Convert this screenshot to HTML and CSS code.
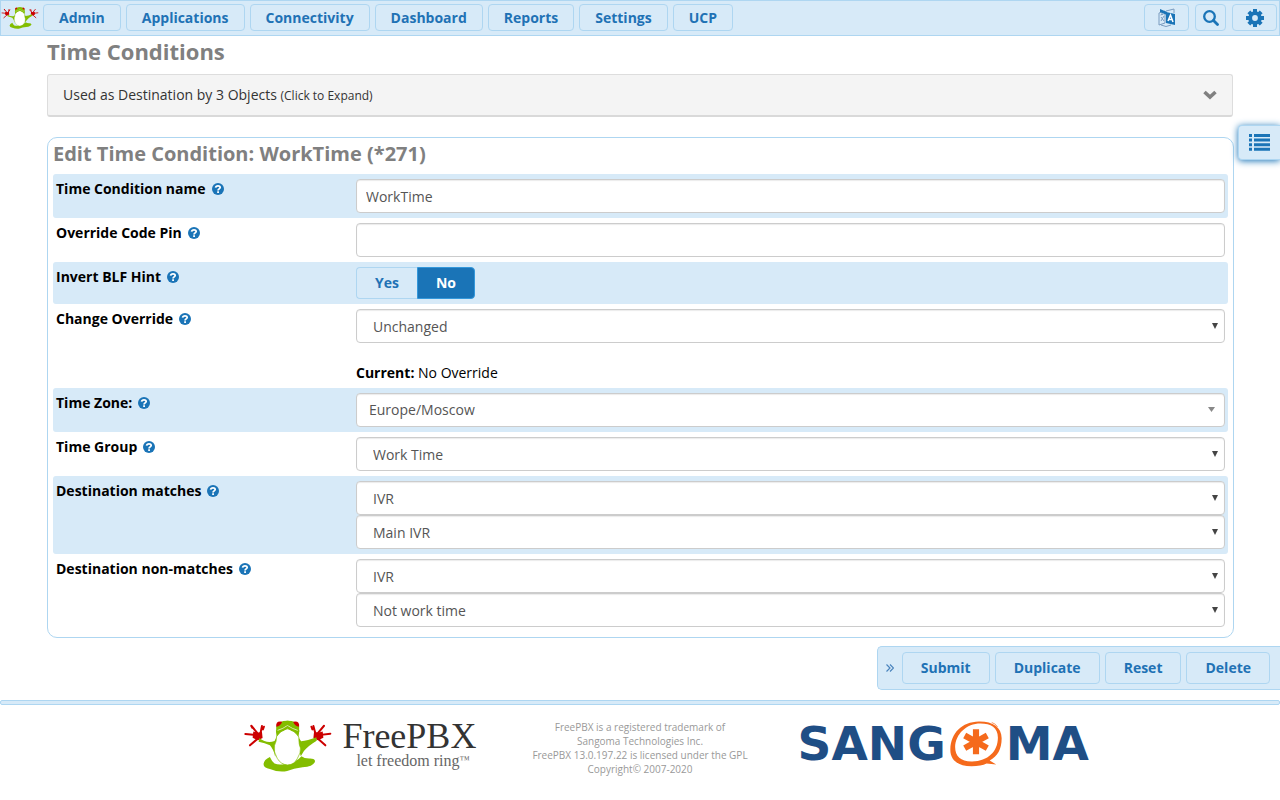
FILE: index.html
```html
<!DOCTYPE html>
<html lang="en">
<head>
<meta charset="utf-8">
<title>Time Conditions</title>
<link rel="stylesheet" href="styles.css">
</head>
<body>
<svg class="defs" aria-hidden="true">
  <symbol id="frog" viewBox="0 0 265 156">
    <g fill="none" stroke="#c00" stroke-width="6" stroke-linecap="round" stroke-linejoin="round">
      <path d="M48 48L22 17M48 48L54 18M46 46L4 42M48 50L18 76M22 18l3 5M57 28l3-8"/>
      <path d="M215 48L241 17M217 48L209 18M218 46L260 41M216 50L245 76M206 28l-3-8"/>
    </g>
    <path fill="#c00" d="M28 34l14 4 12-4 2 20-14 7-16-8zM237 34l-14 4-12-4-2 20 14 7 16-8z"/>
    <path fill="#83bd00" d="M46 55Q70 72 92 63L98 51Q96 39 97 20Q104 2 131 2Q158 2 166 20Q167 38 164 52L172 64Q191 63 218 52L219 62Q193 77 180 94L171 109L154 48L131 23L110 48L94 110Q89 88 78 76Q63 69 44 65z"/>
    <path fill="#83bd00" d="M78 111Q60 119 59 132Q58 144 78 147Q105 158 130 153Q149 145 176 142Q211 140 214 123Q211 115 196 116Q181 116 173 109Q156 130 124 132Q105 136 92 131Q83 123 78 111z"/>
    <path fill="#fff" stroke="#83bd00" stroke-width="2" d="M98 50Q131 3 165 51Q165 76 170 84Q172 98 161 115Q151 135 131 135Q111 134 100 115Q88 96 92 76Q98 65 98 50z"/>
    <path fill="none" stroke="#83bd00" stroke-width="9" d="M97 36Q115 32 131 20Q147 32 166 36"/>
    <path fill="none" stroke="#fff" stroke-width="2" d="M101 31Q118 26 131 16Q145 26 162 31"/>
    <path fill="#83bd00" d="M110 8Q131-4 153 8L150 24 131 14 112 24z"/>
    <path fill="#c00" d="M97 20Q95 1 115 5Q110 18 97 20zM166 20Q168 1 148 5Q153 18 166 20z"/>
  </symbol>
  <symbol id="help" viewBox="0 0 16 16">
    <circle cx="8" cy="8" r="8" fill="#1a74b7"/>
    <path fill="none" stroke="#fff" stroke-width="2.4" d="M4.8 6.3C5.3 2.7 11 3.1 10.9 6C10.8 7.9 8.1 7.8 8.1 10"/>
    <path fill="#fff" d="M6.9 11h2.4v2.2H6.9z"/>
  </symbol>
</svg>

<header class="topbar">
  <a href="#" class="brand" aria-label="FreePBX home"><svg viewBox="0 0 265 156"><use href="#frog"/></svg></a>
  <nav class="menu">
    <button class="btn">Admin</button>
    <button class="btn">Applications</button>
    <button class="btn">Connectivity</button>
    <button class="btn">Dashboard</button>
    <button class="btn">Reports</button>
    <button class="btn">Settings</button>
    <button class="btn">UCP</button>
  </nav>
  <div class="tools">
    <button class="btn tool" aria-label="Language">
      <svg width="18" height="20" viewBox="0 0 18 20"><path fill="none" stroke="#7a9cc0" d="M1 5l6-2v12l-6 2zM8 3l8-2v4M3 17q5 3 10 0M2.500 7l3-1M4 5v2M3 13l3-5M3 9l3 4"/><path fill="#1a74b7" d="M2 1l7 3v3L2 4zM8 4l9 2v11l-9-2z"/><path fill="none" stroke="#fff" stroke-width="1.500" d="M10 13l2.500-6 2.500 7M11 11.500h3"/></svg>
    </button>
    <button class="btn tool narrow" aria-label="Search">
      <svg width="16" height="16" viewBox="0 0 16 16"><circle cx="6.500" cy="6.500" r="5.300" fill="none" stroke="#1a74b7" stroke-width="2.300"/><path d="M10.500 10.500l4 4" stroke="#1a74b7" stroke-width="2.800" stroke-linecap="round"/></svg>
    </button>
    <button class="btn tool" aria-label="Preferences">
      <svg width="18" height="18" viewBox="0 0 18 18"><g stroke="#1a74b7" stroke-width="4"><path d="M9 0v18M0 9h18M2.800 2.800l12.400 12.400M15.200 2.800L2.800 15.200"/></g><circle cx="9" cy="9" r="6.800" fill="#1a74b7"/><circle cx="9" cy="9" r="2.900" fill="#d7eaf8"/></svg>
    </button>
  </div>
</header>

<button class="side-tab" aria-label="Show list">
  <svg width="21" height="17" viewBox="0 0 21 17"><path fill="#1a74b7" d="M0 0h3v3H0zM5 0h16v3H5zM0 4.600h3v3H0zM5 4.600h16v3H5zM0 9.200h3v3H0zM5 9.200h16v3H5zM0 13.800h3v3H0zM5 13.800h16v3H5z"/></svg>
</button>

<main class="page">
  <h1>Time Conditions</h1>
  <button class="usage">
    <span>Used as Destination by 3 Objects <small>(Click to Expand)</small></span>
    <svg width="14" height="10" viewBox="0 0 14 10"><path d="M1.500 2l5.500 5 5.500-5" fill="none" stroke="#808080" stroke-width="3.600"/></svg>
  </button>

  <form class="card" id="condition">
    <h2>Edit Time Condition: WorkTime (*271)</h2>
    <div class="row">
      <div class="label"><label for="name">Time Condition name</label><svg><use href="#help"/></svg></div>
      <div class="field"><input class="control" type="text" id="name" value="WorkTime"></div>
    </div>
    <div class="row">
      <div class="label"><label for="pin">Override Code Pin</label><svg><use href="#help"/></svg></div>
      <div class="field"><input class="control" type="text" id="pin"></div>
    </div>
    <div class="row">
      <div class="label"><span id="blf">Invert BLF Hint</span><svg><use href="#help"/></svg></div>
      <div class="field toggle" role="radiogroup" aria-labelledby="blf">
        <input type="radio" name="invert" id="yes"><label for="yes">Yes</label>
        <input type="radio" name="invert" id="no" checked><label for="no">No</label>
      </div>
    </div>
    <div class="row">
      <div class="label"><label for="override">Change Override</label><svg><use href="#help"/></svg></div>
      <div class="field">
        <div class="select"><select class="control" id="override"><option>Unchanged</option></select></div>
        <p class="current"><strong>Current:</strong> No Override</p>
      </div>
    </div>
    <div class="row">
      <div class="label"><label for="zone">Time Zone:</label><svg><use href="#help"/></svg></div>
      <div class="field"><div class="select search"><select class="control" id="zone"><option>Europe/Moscow</option></select></div></div>
    </div>
    <div class="row">
      <div class="label"><label for="group">Time Group</label><svg><use href="#help"/></svg></div>
      <div class="field"><div class="select"><select class="control" id="group"><option>Work Time</option></select></div></div>
    </div>
    <div class="row">
      <div class="label"><label for="match">Destination matches</label><svg><use href="#help"/></svg></div>
      <div class="field">
        <div class="select"><select class="control" id="match"><option>IVR</option></select></div>
        <div class="select"><select class="control" aria-label="Matching destination"><option>Main IVR</option></select></div>
      </div>
    </div>
    <div class="row">
      <div class="label"><label for="nomatch">Destination non-matches</label><svg><use href="#help"/></svg></div>
      <div class="field">
        <div class="select"><select class="control" id="nomatch"><option>IVR</option></select></div>
        <div class="select"><select class="control" aria-label="Non-matching destination"><option>Not work time</option></select></div>
      </div>
    </div>
  </form>
</main>

<div class="actions">
  <button class="collapse" aria-label="Collapse actions"><svg width="8" height="8" viewBox="0 0 8 8"><path d="M.5.5L4 4 .5 7.500M4 .5L7.500 4 4 7.500" fill="none" stroke="#4a84bd" stroke-width="1.200"/></svg></button>
  <button class="btn" form="condition" type="submit">Submit</button>
  <button class="btn">Duplicate</button>
  <button class="btn" form="condition" type="reset">Reset</button>
  <button class="btn">Delete</button>
</div>

<footer class="footer">
  <a class="freepbx" href="#">
    <svg viewBox="0 0 265 156"><use href="#frog"/></svg>
    <span class="words"><span class="name">FreePBX</span><span class="motto">let freedom ring<small>™</small></span></span>
  </a>
  <p class="legal">FreePBX is a registered trademark of<br>Sangoma Technologies Inc.<br>FreePBX 13.0.197.22 is licensed under the GPL<br>Copyright© 2007-2020</p>
  <a class="sangoma" href="#">
    <span>SANG</span>
    <svg viewBox="0 0 152 134"><path fill="#f56a1c" fill-rule="evenodd" d="M84 1C124 0 151 17 151 50C151 82 139 103 116 115L135 127L107 124Q91 132 63 132C24 132 0 115 1 82C2 35 35 2 84 1zM89 7C48 7 16 38 15 76C15 104 33 119 65 118C111 117 140 89 140 48C140 19 120 7 89 7z"/><path fill="none" stroke="#f56a1c" stroke-width="2" d="M12 48Q18 35 28 27M122 4q12 4 17 13"/><path stroke="#f56a1c" stroke-width="18" d="M76 24v73M43 42l66 37M109 42L43 79"/></svg>
    <span>MA</span>
  </a>
</footer>
</body>
</html>
```
FILE: styles.css
```css
*, *::before, *::after { box-sizing: border-box; }

body {
  margin: 0;
  background: #fff;
  color: #000;
  font: 14px/20px "Open Sans", sans-serif;
}

button, input, select { font: inherit; color: inherit; margin: 0; }
button { cursor: pointer; }
a { text-decoration: none; }
.defs { display: none; }

.btn {
  display: flex;
  align-items: center;
  justify-content: center;
  height: 32px;
  padding: 0 18px;
  border: 1px solid #aed6f1;
  border-radius: 4px;
  background: #d7eaf8;
  color: #1f72b5;
  font-weight: 700;
}

.topbar {
  display: flex;
  align-items: center;
  height: 36px;
  padding: 0 2px 1px 0;
  border: 1px solid #aed6f1;
  background: #d7eaf8;
}
.topbar .btn { height: 27px; padding: 0 15px; }
.brand { width: 42px; }
.brand svg { display: block; width: 38px; height: 22px; }
.menu { display: flex; gap: 5px; }
.tools { display: flex; gap: 6px; margin-left: auto; }
.topbar .tool { width: 45px; padding: 0; }
.topbar .narrow { width: 31px; }

.side-tab {
  position: absolute;
  top: 125px;
  right: 0;
  width: 42px;
  height: 35px;
  padding: 0 0 0 10px;
  border: 1px solid #aed6f1;
  border-right: 0;
  border-radius: 4px 0 0 4px;
  background: #d7eaf8;
  box-shadow: 0 1px 7px #1a74b7;
}
.side-tab svg { display: block; }

.page { padding: 0 47px; }
h1, h2 { margin: 0; color: #808080; font-weight: 700; }
h1 { font-size: 22px; line-height: 30px; }
h2 { font-size: 20px; line-height: 31px; }

.usage {
  display: flex;
  align-items: center;
  justify-content: space-between;
  width: 100%;
  height: 43px;
  margin: 8px 0 20px;
  padding: 0 15px;
  border: 1px solid #ddd;
  border-bottom: 2px solid #d9d9d9;
  border-radius: 3px;
  background: #f4f4f4;
  color: #333;
}
.usage small { font-size: 12px; }

.card {
  margin-right: -1px;
  padding: 0 5px 5px;
  border: 1px solid #aed6f1;
  border-radius: 10px;
}
.card h2 { padding-bottom: 5px; }
.row {
  display: grid;
  grid-template-columns: 300px 1fr;
  padding: 5px 3px;
  border-radius: 3px;
}
.row:nth-of-type(odd) { background: #d7eaf8; }
.label {
  display: flex;
  align-items: center;
  align-self: start;
  gap: 6px;
  font-weight: 700;
}
.label svg { width: 12px; height: 12px; }

.control {
  display: block;
  width: 100%;
  height: 34px;
  padding: 0 9px;
  border: 1px solid #ccc;
  border-radius: 4px;
  background: #fff;
  color: #555;
  box-shadow: inset 0 1px 1px rgba(0, 0, 0, .08);
}
.select { position: relative; }
.select select { appearance: none; padding: 2px 16px 0; }
.select::after {
  content: "";
  position: absolute;
  top: 14px;
  right: 7px;
  width: 6px;
  height: 6px;
  background: #444;
  clip-path: polygon(0 0, 100% 0, 50% 100%);
}
.search select { padding: 0 12px; }
.search::after { right: 10px; width: 7px; height: 5px; background: #888; }
.current { margin: 20px 0 0; }

.toggle { display: flex; height: 32px; }
.toggle input { position: absolute; opacity: 0; }
.toggle label {
  padding: 5px 18px;
  border: 1px solid #aed6f1;
  border-right: 0;
  border-radius: 4px 0 0 4px;
  color: #1f72b5;
  font-weight: 700;
}
.toggle label:last-child { border: 1px solid #3498db; border-radius: 0 4px 4px 0; }
.toggle input:checked + label { background: #1a74b7; color: #fff; }

.actions {
  display: flex;
  align-items: center;
  gap: 5px;
  width: fit-content;
  height: 44px;
  margin: 8px 0 10px auto;
  padding: 0 10px 0 4px;
  border: 1px solid #aed6f1;
  border-right: 0;
  border-radius: 5px 0 0 5px;
  background: #d7eaf8;
}
.collapse { display: flex; width: 15px; padding: 4px; border: 0; background: none; }
.collapse svg { flex: none; }

.footer {
  display: grid;
  grid-template-columns: 1fr auto 1fr;
  align-items: start;
  column-gap: 50px;
}
.footer::before {
  content: "";
  grid-column: 1 / -1;
  height: 5px;
  margin-bottom: 14px;
  border: 1px solid #aed6f1;
  border-radius: 2px;
  background: #d7eaf8;
}
.freepbx { display: flex; gap: 10px; justify-self: end; margin: 1px 6px 0 0; }
.freepbx svg { width: 88px; height: 52px; }
.words { display: flex; flex-direction: column; font-family: "Liberation Serif", serif; }
.name { color: #333; font-size: 36px; line-height: 32px; }
.motto { padding-left: 14px; color: #666; font-size: 16px; line-height: 18px; }
.motto small { font-size: 10px; vertical-align: 3px; line-height: 10px; }
.legal { margin: 1px 0 0; color: #999; font-size: 10px; line-height: 14px; text-align: center; }
.sangoma {
  display: flex;
  align-items: center;
  gap: 4px;
  color: #1f4e85;
  font: bold 47px/50px "DejaVu Sans", sans-serif;
}
.sangoma svg { width: 52px; height: 46px; }
```
